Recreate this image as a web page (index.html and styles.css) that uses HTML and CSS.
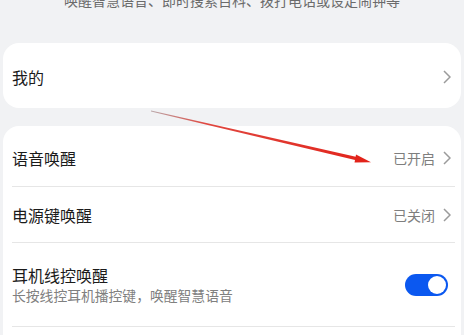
FILE: index.html
```html
<!DOCTYPE html>
<html lang="zh">
<head>
<meta charset="utf-8">
<link rel="stylesheet" href="styles.css">
</head>
<body>
<div class="page">
  <p class="intro">唤醒智慧语音、即时搜索百科、拨打电话或设定闹钟等</p>

  <div class="card card-top">
    <div class="row row-single">
      <span class="title">我的</span>
      <span class="right">
        <svg class="chev" width="8" height="14" viewBox="0 0 8 14"><polyline points="1,1 7,7 1,13" fill="none" stroke="#9b9b9b" stroke-width="1.5"/></svg>
      </span>
    </div>
  </div>

  <div class="card card-list">
    <div class="row row-first">
      <span class="title">语音唤醒</span>
      <span class="right"><span class="value">已开启</span>
        <svg class="chev" width="8" height="14" viewBox="0 0 8 14"><polyline points="1,1 7,7 1,13" fill="none" stroke="#9b9b9b" stroke-width="1.5"/></svg>
      </span>
    </div>
    <div class="row">
      <span class="title">电源键唤醒</span>
      <span class="right"><span class="value">已关闭</span>
        <svg class="chev" width="8" height="14" viewBox="0 0 8 14"><polyline points="1,1 7,7 1,13" fill="none" stroke="#9b9b9b" stroke-width="1.5"/></svg>
      </span>
    </div>
    <div class="row row-tall">
      <span class="texts">
        <span class="title">耳机线控唤醒</span>
        <span class="sub">长按线控耳机播控键，唤醒智慧语音</span>
      </span>
      <span class="toggle"><span class="knob"></span></span>
    </div>
    <div class="row row-rest"></div>
  </div>

  <svg class="arrow" width="464" height="335" viewBox="0 0 464 335">
    <defs>
      <linearGradient id="ag" x1="151" y1="111" x2="370" y2="162" gradientUnits="userSpaceOnUse">
        <stop offset="0" stop-color="#b9a7a9"/>
        <stop offset="0.25" stop-color="#e0473f"/>
        <stop offset="1" stop-color="#e2231a"/>
      </linearGradient>
    </defs>
    <polygon points="151,110.6 358,157.2 357.2,160.6 151,111.6" fill="url(#ag)"/>
    <polygon points="356,154.5 371,162.3 354.5,162.5" fill="#e2231a"/>
  </svg>
</div>
</body>
</html>
```

FILE: styles.css
```css
html, body {
  margin: 0;
  padding: 0;
  background: #f1f2f4;
}

body {
  font-family: "Noto Sans CJK SC", "Noto Sans", sans-serif;
  width: 464px;
  height: 335px;
  overflow: hidden;
}

.page {
  position: relative;
  width: 464px;
  height: 335px;
  overflow: hidden;
}

.intro {
  margin: -9px 0 0 0;
  font-size: 14px;
  line-height: 18px;
  color: #6b6b6b;
  text-align: center;
}

.card {
  background: #ffffff;
  border-radius: 16px;
  margin: 0 3px;
}

.card-top {
  margin-top: 34px;
  height: 65px;
  box-sizing: border-box;
  padding-top: 3px;
}

.card-list {
  margin-top: 18px;
  padding-top: 4px;
  height: 260px;
}

.row {
  display: flex;
  align-items: center;
  justify-content: space-between;
  margin: 0 6px 0 9px;
  height: 56px;
  box-sizing: border-box;
  border-bottom: 1px solid #e6e6e6;
  padding-right: 4px;
}

.row-single {
  height: 62px;
  border-bottom: none;
}

.row-first {
  height: 57px;
}

.row-tall {
  height: 84px;
  padding-right: 7px;
}

.row-rest {
  border-bottom: none;
}

.title {
  font-size: 16px;
  line-height: 20px;
  color: #1b1b1b;
}

.texts {
  display: flex;
  flex-direction: column;
}

.sub {
  font-size: 13.8px;
  line-height: 18px;
  color: #808080;
  margin-top: 1px;
}

.right {
  display: flex;
  align-items: center;
  gap: 8px;
}

.value {
  font-size: 14px;
  line-height: 18px;
  color: #7e7e7e;
}

.chev {
  display: block;
}

.toggle {
  position: relative;
  width: 43px;
  height: 22px;
  border-radius: 11px;
  background: #0b58f0;
}

.knob {
  position: absolute;
  right: 2px;
  top: 2px;
  width: 18px;
  height: 18px;
  border-radius: 50%;
  background: #ffffff;
}

.arrow {
  position: absolute;
  left: 0;
  top: 0;
  pointer-events: none;
}
```
